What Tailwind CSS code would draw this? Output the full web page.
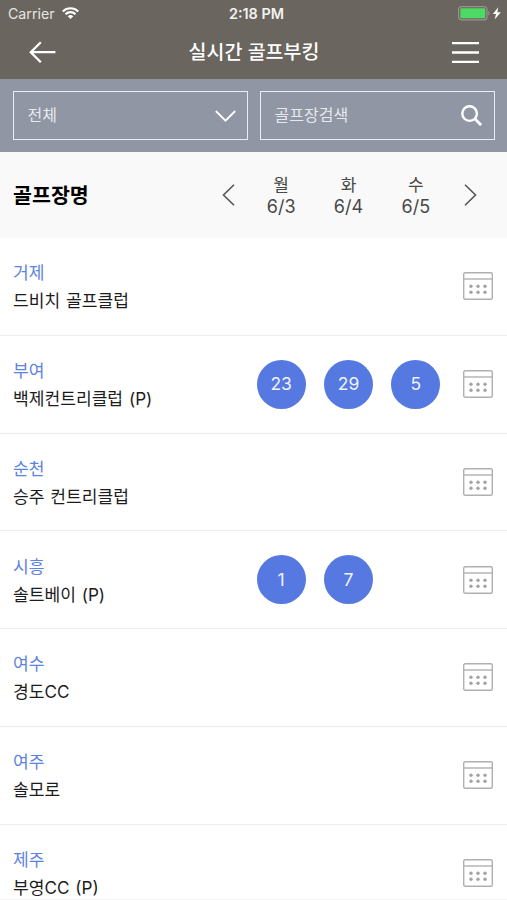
<!DOCTYPE html>
<html lang="ko">
<head>
    <meta charset="UTF-8">
    <meta name="viewport" content="width=device-width, initial-scale=1.0">
    <title>실시간 골프부킹</title>
    <script src="https://cdn.jsdelivr.net/npm/@tailwindcss/browser@4"></script>
</head>
<body class="h-[900px] overflow-hidden bg-white font-[Inter,'Noto_Sans_CJK_KR',sans-serif] text-[17.1px] text-[#1c1c1c]">
    <!-- 달력 아이콘 -->
    <svg class="hidden">
        <symbol id="calendar" viewBox="0 0 30 28">
            <rect x="0.7" y="0.7" width="28.6" height="26.6" rx="1.5" fill="none" stroke="#b0b0b0" stroke-width="1.4" />
            <path d="M1 7h28" stroke="#b0b0b0" stroke-width="1.4" />
            <g fill="#a3a3a3">
                <circle cx="8" cy="14.3" r="1.7" /><circle cx="15" cy="14.3" r="1.7" /><circle cx="22" cy="14.3" r="1.7" />
                <circle cx="8" cy="20.3" r="1.7" /><circle cx="15" cy="20.3" r="1.7" /><circle cx="22" cy="20.3" r="1.7" />
            </g>
        </symbol>
    </svg>

    <!-- 헤더 -->
    <header class="h-[79px] bg-[#6a655e] text-white">
        <div class="grid h-[27px] grid-cols-3 items-center pl-2 pr-1.5">
            <div class="flex items-center gap-[7px] text-[14.2px] text-[#e8e6e3]">
                <span>Carrier</span>
                <svg class="h-3 w-[17px]" viewBox="0 0 17 12" fill="none" stroke="#fff" stroke-width="2.1">
                    <path d="M0.8 4.4a11 11 0 0 1 15.4 0" />
                    <path d="M3.5 7.2a7.1 7.1 0 0 1 10 0" />
                    <path d="M8.5 12L5.7 9.3a4 4 0 0 1 5.6 0z" fill="#fff" stroke="none" />
                </svg>
            </div>
            <div class="pl-1 text-center text-[14.4px] font-semibold text-[#f3f2f0]">2:18 PM</div>
            <div class="flex items-center justify-end">
                <svg class="h-[15px] w-[43px]" viewBox="0 0 43 15">
                    <rect x="0.6" y="0.6" width="28.4" height="13.3" rx="3" fill="none" stroke="#98938d" stroke-width="1.2" />
                    <rect x="2.3" y="2.3" width="25" height="9.9" rx="1.2" fill="#4cd964" />
                    <path d="M30.3 5c1.6.5 1.6 4 0 4.6z" fill="#98938d" />
                    <path d="M40.3 1.2L34.8 8h3.2l-1.3 5.4L42.8 6.2h-3.5z" fill="#fff" />
                </svg>
            </div>
        </div>
        <div class="flex h-[50px] items-center justify-between pl-[29px] pr-[27px]">
            <svg class="h-[22px] w-[27px]" viewBox="0 0 27 22" fill="none" stroke="#fff" stroke-width="2.3">
                <path d="M11.8 1.2L1.8 11.2l10 10M1.8 11.2h24.6" />
            </svg>
            <h1 class="pt-px text-[19.5px] font-medium">실시간 골프부킹</h1>
            <svg class="h-[23px] w-[28px]" viewBox="0 0 28 23" fill="none" stroke="#fff" stroke-width="2.3">
                <path d="M0 2.2h27M0 11.5h27M0 20.9h27" />
            </svg>
        </div>
    </header>

    <!-- 검색 -->
    <section class="grid h-[73px] grid-cols-2 gap-3 bg-[#9196a4] px-[12.5px] pt-3 text-[16px] text-[#e6e9ef]">
        <div class="flex h-[49px] items-center justify-between border-[1.5px] border-[#e9eef6] pl-3.5 pr-[11px]">
            <span class="pb-px">전체</span>
            <svg class="h-3 w-[21px]" viewBox="0 0 21 12" fill="none" stroke="#fff" stroke-width="1.8">
                <path d="M0.8 1l9.7 9.7L20.2 1" />
            </svg>
        </div>
        <div class="flex h-[49px] items-center justify-between border-[1.5px] border-[#e9eef6] pl-3.5 pr-3">
            <span class="pb-px">골프장검색</span>
            <svg class="h-[21px] w-[21px]" viewBox="0 0 21 21" fill="none" stroke="#fff" stroke-width="2.4">
                <circle cx="8.6" cy="8.6" r="7.3" />
                <path d="M13.8 13.8l6.3 6.3" stroke-width="2.8" />
            </svg>
        </div>
    </section>

    <!-- 날짜 -->
    <section class="flex h-[86px] items-center bg-[#f9f9f9] pl-[13px] pr-[14px]">
        <h2 class="flex-1 pt-0.5 text-[20.6px] font-bold text-black">골프장명</h2>
        <svg class="mr-[13px] h-[22px] w-[13px]" viewBox="0 0 13 22" fill="none" stroke="#555" stroke-width="1.6">
            <path d="M12 0.8L1.5 11L12 21.2" />
        </svg>
        <div class="grid w-[202px] grid-cols-3 pt-0.5 text-center text-[18px] leading-[22px] text-[#484848]">
            <div><p class="text-[17px]">월</p><p>6/3</p></div>
            <div><p class="text-[17px]">화</p><p>6/4</p></div>
            <div><p class="text-[17px]">수</p><p>6/5</p></div>
        </div>
        <div class="flex w-[43.5px] pl-[14px]">
            <svg class="h-[22px] w-[13px]" viewBox="0 0 13 22" fill="none" stroke="#555" stroke-width="1.6">
                <path d="M1 0.8L11.5 11L1 21.2" />
            </svg>
        </div>
    </section>

    <!-- 골프장 목록 -->
    <ul>
        <li class="flex h-[97.75px] items-center border-b border-[#ececec] pl-[13px] pr-[14px]">
            <div class="flex-1 pt-0.5 leading-7 [word-spacing:1px]"><p class="text-[#5b83e0]">거제</p><p>드비치 골프클럽</p></div>
            <svg class="h-7 w-[30px]"><use href="#calendar" /></svg>
        </li>
        <li class="flex h-[97.75px] items-center border-b border-[#ececec] pl-[13px] pr-[14px]">
            <div class="flex-1 pt-0.5 leading-7 [word-spacing:1px]"><p class="text-[#5b83e0]">부여</p><p>백제컨트리클럽 (P)</p></div>
            <div class="mr-[13.5px] grid w-[202px] grid-cols-3 justify-items-center text-[17.5px] text-[#eef2fd]">
                <span class="flex size-[49px] items-center justify-center rounded-full bg-[#5579e1]">23</span>
                <span class="flex size-[49px] items-center justify-center rounded-full bg-[#5579e1]">29</span>
                <span class="flex size-[49px] items-center justify-center rounded-full bg-[#5579e1]">5</span>
            </div>
            <svg class="h-7 w-[30px]"><use href="#calendar" /></svg>
        </li>
        <li class="flex h-[97.75px] items-center border-b border-[#ececec] pl-[13px] pr-[14px]">
            <div class="flex-1 pt-0.5 leading-7 [word-spacing:1px]"><p class="text-[#5b83e0]">순천</p><p>승주 컨트리클럽</p></div>
            <svg class="h-7 w-[30px]"><use href="#calendar" /></svg>
        </li>
        <li class="flex h-[97.75px] items-center border-b border-[#ececec] pl-[13px] pr-[14px]">
            <div class="flex-1 pt-0.5 leading-7 [word-spacing:1px]"><p class="text-[#5b83e0]">시흥</p><p>솔트베이 (P)</p></div>
            <div class="mr-[13.5px] grid w-[202px] grid-cols-3 justify-items-center text-[17.5px] text-[#eef2fd]">
                <span class="flex size-[49px] items-center justify-center rounded-full bg-[#5579e1]">1</span>
                <span class="flex size-[49px] items-center justify-center rounded-full bg-[#5579e1]">7</span>
            </div>
            <svg class="h-7 w-[30px]"><use href="#calendar" /></svg>
        </li>
        <li class="flex h-[97.75px] items-center border-b border-[#ececec] pl-[13px] pr-[14px]">
            <div class="flex-1 pt-0.5 leading-7 [word-spacing:1px]"><p class="text-[#5b83e0]">여수</p><p>경도CC</p></div>
            <svg class="h-7 w-[30px]"><use href="#calendar" /></svg>
        </li>
        <li class="flex h-[97.75px] items-center border-b border-[#ececec] pl-[13px] pr-[14px]">
            <div class="flex-1 pt-0.5 leading-7 [word-spacing:1px]"><p class="text-[#5b83e0]">여주</p><p>솔모로</p></div>
            <svg class="h-7 w-[30px]"><use href="#calendar" /></svg>
        </li>
        <!-- 화면 아래에서 잘리는 행 -->
        <li class="h-[75.5px] overflow-hidden border-b border-[#f4f4f4] pl-[13px] pr-[14px]">
            <div class="flex h-[97px] items-center">
                <div class="flex-1 pt-0.5 leading-7 [word-spacing:1px]"><p class="text-[#5b83e0]">제주</p><p>부영CC (P)</p></div>
                <svg class="h-7 w-[30px]"><use href="#calendar" /></svg>
            </div>
        </li>
    </ul>
</body>
</html>
